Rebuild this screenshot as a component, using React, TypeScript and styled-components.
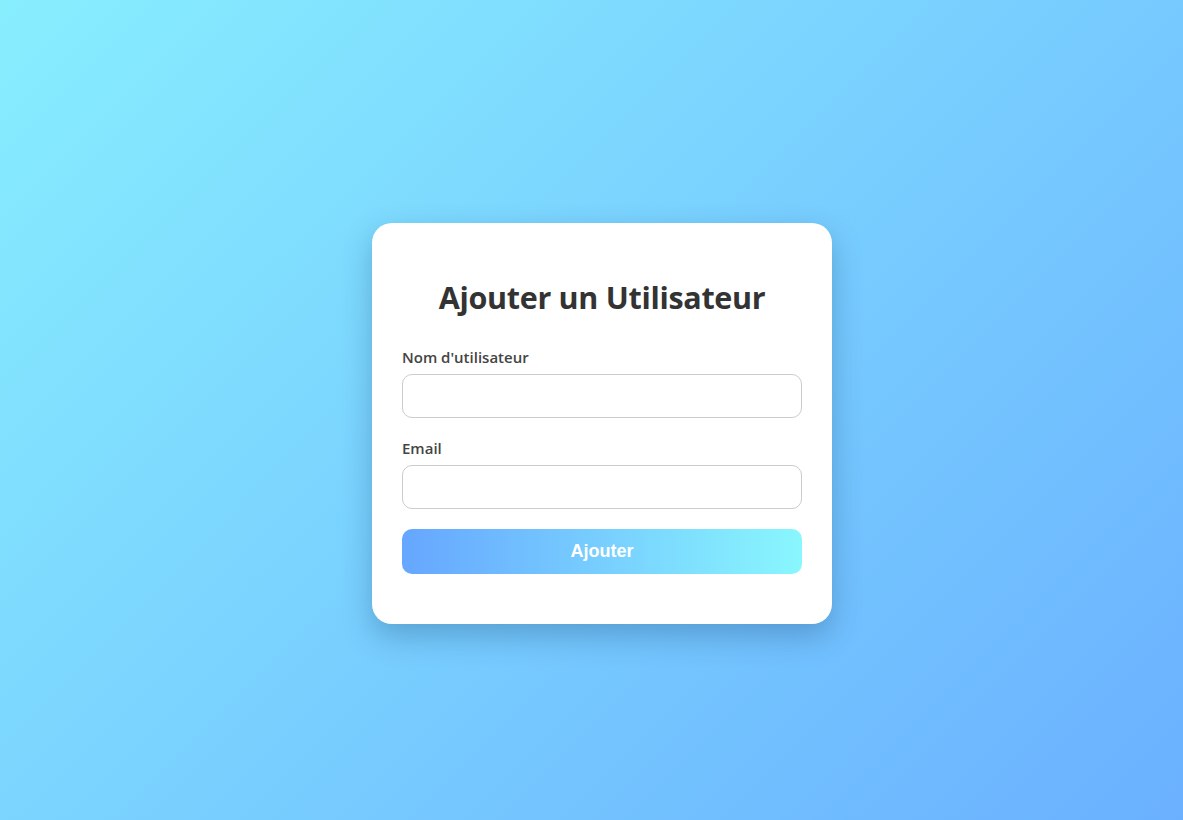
import React from "react";
import styled, { createGlobalStyle } from "styled-components";

const Global = createGlobalStyle`
  * { box-sizing: border-box; }
  html, body { margin: 0; padding: 0; }
  body {
    font-family: "Open Sans", "Noto Sans", sans-serif;
    background: linear-gradient(135deg, #87eefe 0%, #6ab0ff 100%);
    min-height: 100vh;
  }
`;

const Page = styled.div`
  min-height: 100vh;
  display: flex;
  align-items: center;
  justify-content: center;
  padding: 27px 0 0 21px;
`;

const Card = styled.form`
  width: 460px;
  background: #fff;
  border-radius: 20px;
  padding: 30px 30px 50px;
  box-shadow: 0 12px 30px rgba(20, 60, 110, 0.3);
  display: flex;
  flex-direction: column;
`;

const Title = styled.h2`
  margin: 23px 0 29px;
  text-align: center;
  font-size: 30.5px;
  font-weight: 700;
  color: #333;
  letter-spacing: -0.3px;
`;

const Field = styled.div`
  display: flex;
  flex-direction: column;
  margin-bottom: 20px;
`;

const Label = styled.label`
  font-size: 15px;
  font-weight: 600;
  color: #444;
  margin-bottom: 6px;
  line-height: 21px;
`;

const Input = styled.input`
  height: 44px;
  border: 1px solid #ccc;
  border-radius: 10px;
  padding: 0 12px;
  font-size: 16px;
  background: #fff;
  outline: none;
`;

const Button = styled.button`
  height: 45px;
  border: none;
  border-radius: 10px;
  background: linear-gradient(to right, #66a6ff, #89f7fe);
  color: #fff;
  font-family: "Liberation Sans", Arial, sans-serif;
  font-size: 18px;
  font-weight: 700;
  cursor: pointer;
`;

export default function App() {
  return (
    <>
      <Global />
      <Page>
        <Card onSubmit={(e) => e.preventDefault()}>
          <Title>Ajouter un Utilisateur</Title>
          <Field>
            <Label>Nom d'utilisateur</Label>
            <Input type="text" />
          </Field>
          <Field>
            <Label>Email</Label>
            <Input type="email" />
          </Field>
          <Button type="submit">Ajouter</Button>
        </Card>
      </Page>
    </>
  );
}
